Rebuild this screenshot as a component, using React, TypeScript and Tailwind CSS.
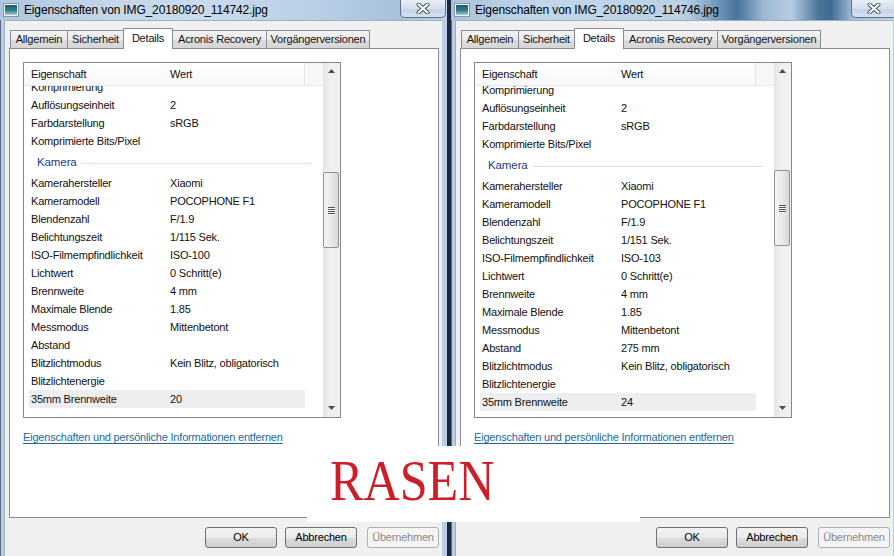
import React from "react";

type Vals = { bel: string; iso: string; abstand: string; b35: string };
type Row = { k: string; v?: string; group?: boolean; hl?: boolean };

function makeRows(v: Vals): Row[] {
  return [
    { k: "Komprimierung" },
    { k: "Auflösungseinheit", v: "2" },
    { k: "Farbdarstellung", v: "sRGB" },
    { k: "Komprimierte Bits/Pixel" },
    { k: "Kamera", group: true },
    { k: "Kamerahersteller", v: "Xiaomi" },
    { k: "Kameramodell", v: "POCOPHONE F1" },
    { k: "Blendenzahl", v: "F/1.9" },
    { k: "Belichtungszeit", v: v.bel },
    { k: "ISO-Filmempfindlichkeit", v: v.iso },
    { k: "Lichtwert", v: "0 Schritt(e)" },
    { k: "Brennweite", v: "4 mm" },
    { k: "Maximale Blende", v: "1.85" },
    { k: "Messmodus", v: "Mittenbetont" },
    { k: "Abstand", v: v.abstand },
    { k: "Blitzlichtmodus", v: "Kein Blitz, obligatorisch" },
    { k: "Blitzlichtenergie" },
    { k: "35mm Brennweite", v: v.b35, hl: true },
  ];
}

function FileIcon() {
  return (
    <svg width="16" height="14" viewBox="0 0 16 14" className="shrink-0">
      <defs>
        <linearGradient id="ig" x1="0" y1="0" x2="0" y2="1">
          <stop offset="0" stopColor="#1f5a6e" />
          <stop offset="0.55" stopColor="#2f7f8f" />
          <stop offset="1" stopColor="#9fd0d6" />
        </linearGradient>
      </defs>
      <rect x="0.5" y="0.5" width="15" height="13" fill="#f4f6f8" stroke="#8a96a3" />
      <rect x="2" y="2" width="12" height="10" fill="url(#ig)" />
    </svg>
  );
}

function CloseBtn() {
  return (
    <div className="absolute right-[1px] top-0 w-[46px] h-[18px] rounded-b-[5px] border border-t-0 border-[#5d6f88] bg-[linear-gradient(180deg,#e9f0f8,#d3dfed_50%,#c2d2e4_51%,#d5e2f0)] flex items-center justify-center">
      <svg width="14" height="11" viewBox="0 0 14 11">
        <path d="M2.5 1.5 L11.5 9.5 M11.5 1.5 L2.5 9.5" stroke="#3c4a5e" strokeWidth="4" strokeLinecap="round" />
        <path d="M2.5 1.5 L11.5 9.5 M11.5 1.5 L2.5 9.5" stroke="#ffffff" strokeWidth="2.2" strokeLinecap="round" />
      </svg>
    </div>
  );
}

function Tab({ label, w, selected, first }: { label: string; w: string; selected?: boolean; first?: boolean }) {
  if (selected) {
    return (
      <div className={`relative z-10 ${w} h-[21px] -ml-px bg-white border border-b-0 border-[#898c95] flex items-center justify-center pb-[2px]`}>
        {label}
      </div>
    );
  }
  return (
    <div
      className={`${w} h-[19px] ${first ? "" : "-ml-px"} border border-[#898c95] bg-[linear-gradient(180deg,#f3f3f3,#ebebeb_50%,#dddddd_51%,#d6d6d6)] flex items-center justify-center pb-[1px]`}
    >
      {label}
    </div>
  );
}

function Btn({ label, disabled, cls }: { label: string; disabled?: boolean; cls?: string }) {
  return (
    <div
      className={`w-[72px] h-[21px] rounded-[3px] flex items-center justify-center ${cls ?? ""} ${
        disabled
          ? "border border-[#adb2b5] bg-[#f4f4f4] text-[#8a8a8a]"
          : "border border-[#707070] bg-[linear-gradient(180deg,#f2f2f2,#ebebeb_50%,#dddddd_51%,#cfcfcf)] text-black"
      }`}
    >
      {label}
    </div>
  );
}

function Grip() {
  return (
    <div className="flex flex-col gap-[1px] items-center">
      {[0, 1, 2, 3].map((i) => (
        <div key={i} className="w-[7px] h-[1px] bg-[#555] shadow-[0_1px_0_#fafafa]" />
      ))}
    </div>
  );
}

function List({ vals, offsetCls, thumbCls }: { vals: Vals; offsetCls: string; thumbCls: string }) {
  const rows = makeRows(vals);
  return (
    <div className="w-[318px] h-[356px] border border-[#828790] bg-white flex">
      <div className="w-[299px] flex flex-col">
        <div className="h-[23px] shrink-0 flex border-b border-[#e5e7ea] bg-[linear-gradient(180deg,#ffffff,#f7f8fa)]">
          <div className="w-[139px] pl-[7px] flex items-center">Eigenschaft</div>
          <div className="w-[142px] pl-[7px] flex items-center border-r border-[#e3e5e8]">Wert</div>
          <div className="flex-1 bg-[#f6f7f8]" />
        </div>
        <div className="flex-1 overflow-hidden">
          <div className={offsetCls}>
            {rows.map((r, i) =>
              r.group ? (
                <div key={i} className="h-[24px] w-[288px] flex items-center pl-[13px] pt-[2px] text-[#1e3a8a] text-[11.5px] tracking-[-0.1px]">
                  <span>{r.k}</span>
                  <div className="flex-1 h-px bg-[#dde3ec] ml-[4px]" />
                </div>
              ) : (
                <div
                  key={i}
                  className={`h-[18px] ml-[5px] w-[276px] pl-[2px] flex items-center whitespace-nowrap ${r.hl ? "bg-[#eeeeee]" : ""}`}
                >
                  <span className="w-[139px] shrink-0">{r.k}</span>
                  <span>{r.v ?? ""}</span>
                </div>
              )
            )}
          </div>
        </div>
      </div>
      <div className="w-[17px] h-full relative bg-[linear-gradient(90deg,#e4e4e4,#efefef_40%,#f1f1f1)]">
        <svg width="7" height="4" viewBox="0 0 7 4" className="absolute left-[5px] top-[6px]">
          <path d="M0 4 L3.5 0 L7 4 Z" fill="#4a4a4a" />
        </svg>
        <div className={`absolute left-0 w-[16px] h-[76px] rounded-[2px] border border-[#929292] bg-[linear-gradient(90deg,#f5f5f5,#e9e9e9_50%,#d9d9d9)] flex items-center justify-center ${thumbCls}`}>
          <Grip />
        </div>
        <svg width="7" height="4" viewBox="0 0 7 4" className="absolute left-[5px] bottom-[7px]">
          <path d="M0 0 L7 0 L3.5 4 Z" fill="#4a4a4a" />
        </svg>
      </div>
    </div>
  );
}

function Win({
  title,
  vals,
  offsetCls,
  thumbCls,
  titleBg,
}: {
  title: string;
  vals: Vals;
  offsetCls: string;
  thumbCls: string;
  titleBg: string;
}) {
  return (
    <div className="relative w-[447px] h-[556px] shrink-0 flex flex-col bg-[#b9cee5] border-l border-[#5a6a80]">
      <div className={`h-[20px] shrink-0 flex items-center relative -ml-px ${titleBg}`}>
        <div className="ml-[3px]">
          <FileIcon />
        </div>
        <span className="ml-[5px] text-[12px] tracking-[-0.15px] text-black whitespace-nowrap">{title}</span>
        <CloseBtn />
      </div>
      <div className="flex-1 ml-[3px] mr-[5px] bg-[#f0f0f0] border-t border-l border-[#9fb0c4] pt-[7px]">
        <div className="flex items-end h-[21px] pl-[5px]">
          <Tab label="Allgemein" w="w-[58px]" first />
          <Tab label="Sicherheit" w="w-[57px]" />
          <Tab label="Details" w="w-[50px]" selected />
          <Tab label="Acronis Recovery" w="w-[95px]" />
          <Tab label="Vorgängerversionen" w="w-[104px]" />
        </div>
        <div className="relative -mt-px ml-[4px] w-[430px] h-[470px] border border-[#898c95] bg-white p-[13px]">
          <List vals={vals} offsetCls={offsetCls} thumbCls={thumbCls} />
          <div className="mt-[12px] leading-[14px] text-[#1b69a3] underline underline-offset-[2px] whitespace-nowrap">
            Eigenschaften und persönliche Informationen entfernen
          </div>
        </div>
        <div className="mt-[9px] flex justify-end pr-[3px]">
          <Btn label="OK" />
          <Btn label="Abbrechen" cls="ml-[8px]" />
          <Btn label="Übernehmen" disabled cls="ml-[10px]" />
        </div>
      </div>
    </div>
  );
}

export default function App() {
  return (
    <div className="relative w-[894px] h-[556px] overflow-hidden flex gap-[4px] bg-[linear-gradient(90deg,#34475f,#1b2940,#3a4e68)] font-['Liberation_Sans',Arial,sans-serif] text-[11px] tracking-[-0.2px] text-[#111]">
      <Win
        title="Eigenschaften von IMG_20180920_114742.jpg"
        vals={{ bel: "1/115 Sek.", iso: "ISO-100", abstand: "", b35: "20" }}
        offsetCls="-mt-[8px]"
        thumbCls="top-[109px]"
        titleBg="bg-[linear-gradient(to_right,#aec6df,#c4d7eb_25%,#cadcee_45%,#b9cfe6_70%,#a8c2dc_88%,#bcd0e6)]"
      />
      <Win
        title="Eigenschaften von IMG_20180920_114746.jpg"
        vals={{ bel: "1/151 Sek.", iso: "ISO-103", abstand: "275 mm", b35: "24" }}
        offsetCls="-mt-[5px]"
        thumbCls="top-[107px]"
        titleBg="bg-[linear-gradient(to_right,#a9c2dc,#c2d6ea_20%,#bcd1e7_52%,#6f95b8_60%,#46729a_64%,#9cb8d3_70%,#b8cde4_76%,#4d789c_82%,#3f6b92_85%,#a5bfd9_90%,#c0d3e8)]"
      />
      <div className="absolute left-[307px] top-[446px] w-[333px] h-[76px] bg-white pl-[23px] pt-[6px]">
        <div className="inline-block origin-left scale-x-[0.88] font-['Liberation_Serif',serif] text-[57px] leading-none tracking-normal text-[#cc1f2a]">
          RASEN
        </div>
      </div>
    </div>
  );
}
